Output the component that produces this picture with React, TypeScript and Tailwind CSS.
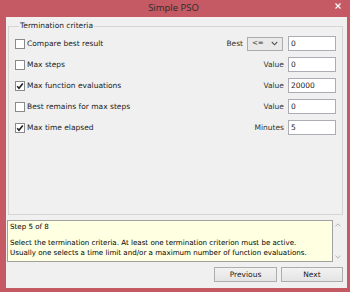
import React from 'react';

const ui = { fontFamily: '"DejaVu Sans", Verdana, sans-serif' };

interface Criterion {
  label: string;
  checked: boolean;
  field: string;
  value: string;
  select?: boolean;
}

const criteria: Criterion[] = [
  { label: 'Compare best result', checked: false, field: 'Best', value: '0', select: true },
  { label: 'Max steps', checked: false, field: 'Value', value: '0' },
  { label: 'Max function evaluations', checked: true, field: 'Value', value: '20000' },
  { label: 'Best remains for max steps', checked: false, field: 'Value', value: '0' },
  { label: 'Max time elapsed', checked: true, field: 'Minutes', value: '5' },
];

const CheckBox: React.FC<{ checked: boolean }> = ({ checked }) => (
  <span className="flex h-[10px] w-[10px] shrink-0 items-center justify-center border border-[#8a8a8a] bg-white">
    {checked && (
      <svg width="8" height="8" viewBox="0 0 8 8">
        <path d="M1.2 4.2 L3 6.2 L6.8 1.4" fill="none" stroke="#222" strokeWidth="1.6" />
      </svg>
    )}
  </span>
);

const Row: React.FC<{ c: Criterion }> = ({ c }) => (
  <div className="flex h-[21px] items-center">
    <CheckBox checked={c.checked} />
    <span className="ml-[2px] text-[7.5px] text-[#222]">{c.label}</span>
    <div className="ml-auto flex items-center">
      <span className="mr-[4px] text-[7.5px] text-[#333]">{c.field}</span>
      {c.select && (
        <div className="mr-[5px] flex h-[14px] w-[36px] items-center justify-between border border-[#acacac] bg-[#e9e9e9] px-[4px]">
          <span className="text-[7px] text-[#333]">&lt;=</span>
          <svg width="7" height="5" viewBox="0 0 7 5">
            <path d="M0.8 1 L3.5 3.8 L6.2 1" fill="none" stroke="#555" strokeWidth="1.1" />
          </svg>
        </div>
      )}
      <div className="flex h-[15px] w-[48px] items-center border border-[#abadb3] bg-white px-[2px]">
        <span className="text-[7.5px] text-[#222]">{c.value}</span>
      </div>
    </div>
  </div>
);

const Button: React.FC<{ label: string; w: string }> = ({ label, w }) => (
  <button
    className={`flex h-[15px] ${w} items-center justify-center border border-[#adadad] bg-gradient-to-b from-[#f2f2f2] to-[#e4e4e4] text-[7.5px] text-[#222]`}
    style={ui}
  >
    {label}
  </button>
);

export default function App() {
  return (
    <div className="flex h-[292px] w-[350px] flex-col bg-[#c55a64] pb-[4px] pl-[6px] pr-[3px]" style={ui}>
      <div className="relative flex h-[17px] shrink-0 items-center justify-center">
        <span className="ml-[-6px] text-[9.5px] text-[#2b2b2b]" style={{ fontFamily: '"Open Sans", sans-serif' }}>
          Simple PSO
        </span>
        <svg className="absolute right-[6px] top-[3px]" width="6" height="6" viewBox="0 0 6 6">
          <path d="M0.5 0.5 L5.5 5.5 M5.5 0.5 L0.5 5.5" stroke="#fff" strokeWidth="1.2" />
        </svg>
      </div>
      <div className="flex flex-1 flex-col bg-[#f0f0f0]">
        <fieldset className="ml-[2px] mr-[4px] mt-[4px] h-[194px] border border-[#d5d5d5] px-[6px]">
          <legend className="ml-[4px] px-[1px] text-[7.5px] leading-[10px] text-[#222]">Termination criteria</legend>
          <div className="pt-[2px]">
            {criteria.map((c) => (
              <Row key={c.label} c={c} />
            ))}
          </div>
        </fieldset>
        <div className="ml-[1px] mr-[4px] mt-[5px] flex h-[42px]">
          <div className="flex-1 border border-[#a0a0a0] bg-[#ffffe1] px-[2px] pt-[1px] text-[7.1px] leading-[10px] text-black">
            <p>Step 5 of 8</p>
            <p className="mt-[6px]">
              Select the termination criteria. At least one termination criterion must be active.
              <br />
              Usually one selects a time limit and/or a maximum number of function evaluations.
            </p>
          </div>
          <div className="flex w-[10px] flex-col items-center justify-between py-[3px]">
            <svg width="6" height="4" viewBox="0 0 6 4">
              <path d="M0.6 3.4 L3 0.8 L5.4 3.4" fill="none" stroke="#b5b5b5" strokeWidth="1" />
            </svg>
            <svg width="6" height="4" viewBox="0 0 6 4">
              <path d="M0.6 0.6 L3 3.2 L5.4 0.6" fill="none" stroke="#b5b5b5" strokeWidth="1" />
            </svg>
          </div>
        </div>
        <div className="mr-[4px] mt-[5px] flex justify-end gap-[4px]">
          <Button label="Previous" w="w-[63px]" />
          <Button label="Next" w="w-[62px]" />
        </div>
      </div>
    </div>
  );
}
